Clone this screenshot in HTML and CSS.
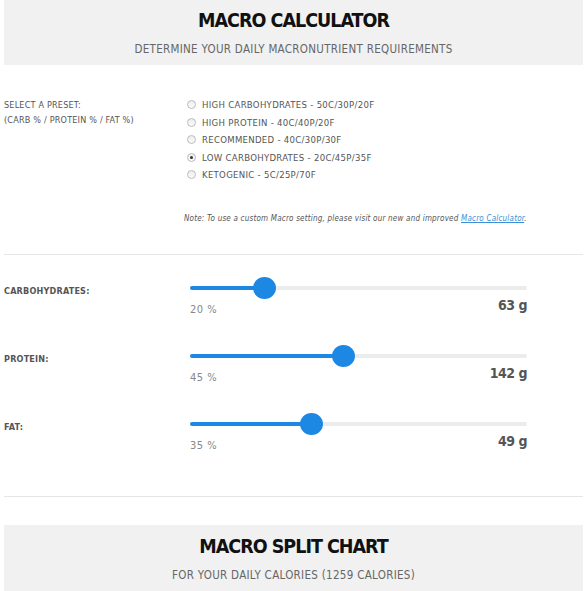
FILE: index.html
```html
<!DOCTYPE html>
<html>
<head>
<meta charset="utf-8">
<link rel="stylesheet" href="styles.css">
</head>
<body>
<div class="page">
  <div class="banner">
    <h1 class="banner-title">MACRO CALCULATOR</h1>
    <p class="banner-sub">DETERMINE YOUR DAILY MACRONUTRIENT REQUIREMENTS</p>
  </div>

  <div class="preset">
    <div class="preset-label">
      <div>SELECT A PRESET:</div>
      <div>(CARB % / PROTEIN % / FAT %)</div>
    </div>
    <div class="preset-options">
      <label class="opt"><span class="radio"></span>HIGH CARBOHYDRATES - 50C/30P/20F</label>
      <label class="opt"><span class="radio"></span>HIGH PROTEIN - 40C/40P/20F</label>
      <label class="opt"><span class="radio"></span>RECOMMENDED - 40C/30P/30F</label>
      <label class="opt"><span class="radio checked"></span>LOW CARBOHYDRATES - 20C/45P/35F</label>
      <label class="opt"><span class="radio"></span>KETOGENIC - 5C/25P/70F</label>
    </div>
  </div>
  <p class="note">Note: To use a custom Macro setting, please visit our new and improved <a href="#">Macro Calculator</a>.</p>

  <hr class="rule">

  <div class="macros">
    <div class="macro">
      <div class="macro-name">CARBOHYDRATES:</div>
      <div class="macro-ctrl">
        <div class="slider"><div class="fill" style="width:calc(11px + 0.20 * (100% - 22px))"></div><div class="thumb" style="left:calc(0.20 * (100% - 22px))"></div></div>
        <div class="macro-vals"><span class="pct">20 %</span><span class="grams">63 g</span></div>
      </div>
    </div>
    <div class="macro">
      <div class="macro-name">PROTEIN:</div>
      <div class="macro-ctrl">
        <div class="slider"><div class="fill" style="width:calc(11px + 0.45 * (100% - 22px))"></div><div class="thumb" style="left:calc(0.45 * (100% - 22px))"></div></div>
        <div class="macro-vals"><span class="pct">45 %</span><span class="grams">142 g</span></div>
      </div>
    </div>
    <div class="macro">
      <div class="macro-name">FAT:</div>
      <div class="macro-ctrl">
        <div class="slider"><div class="fill" style="width:calc(11px + 0.35 * (100% - 22px))"></div><div class="thumb" style="left:calc(0.35 * (100% - 22px))"></div></div>
        <div class="macro-vals"><span class="pct">35 %</span><span class="grams">49 g</span></div>
      </div>
    </div>
  </div>

  <hr class="rule rule2">

  <div class="banner banner2">
    <h2 class="banner-title">MACRO SPLIT CHART</h2>
    <p class="banner-sub">FOR YOUR DAILY CALORIES (1259 CALORIES)</p>
  </div>
</div>
</body>
</html>
```

FILE: styles.css
```css
html, body {
  margin: 0;
  padding: 0;
  background: #fff;
}
body {
  font-family: "DejaVu Sans", "Liberation Sans", sans-serif;
  font-stretch: condensed;
  color: #555;
}
.page {
  padding: 0 4px;
  width: 579px;
}
.banner {
  background: #f1f1f1;
  height: 65px;
  text-align: center;
  padding-top: 9px;
  box-sizing: border-box;
}
.banner-title {
  margin: 0;
  font-size: 19.5px;
  line-height: 24px;
  font-weight: bold;
  color: #111;
  letter-spacing: -1px;
}
.banner-sub {
  margin: 9px 0 0;
  font-size: 11.5px;
  line-height: 14px;
  color: #666;
  letter-spacing: 0.3px;
}
.preset {
  display: flex;
  margin-top: 31px;
}
.preset-label {
  width: 182px;
  font-size: 9px;
  line-height: 15px;
  color: #555;
  padding-top: 2px;
  letter-spacing: 0.2px;
}
.preset-options {
  display: flex;
  flex-direction: column;
  gap: 0;
}
.opt {
  display: flex;
  align-items: center;
  height: 17.5px;
  font-size: 9.5px;
  color: #555;
  letter-spacing: 0.3px;
}
.radio {
  width: 9px;
  height: 9px;
  border-radius: 50%;
  border: 1px solid #bbb;
  background: linear-gradient(#eee, #fafafa);
  margin-right: 6px;
  box-sizing: border-box;
  position: relative;
  margin-left: 1px;
}
.radio.checked::after {
  content: "";
  position: absolute;
  left: 2px;
  top: 2px;
  width: 3px;
  height: 3px;
  border-radius: 50%;
  background: #333;
}
.note {
  margin: 30px 0 0;
  font-size: 8px;
  font-style: italic;
  color: #555;
  padding-left: 180px;
  letter-spacing: 0.2px;
}
.note a {
  color: #3a8fd6;
  text-decoration: underline;
}
.rule {
  border: 0;
  border-top: 1px solid #e6e6e6;
  margin: 31px 0 0;
}
.macros {
  margin-top: 22px;
}
.macro {
  display: flex;
  height: 68px;
}
.macro-name {
  width: 186px;
  font-size: 9px;
  font-weight: bold;
  color: #555;
  padding-top: 9px;
  letter-spacing: 0.2px;
}
.macro-ctrl {
  width: 337px;
}
.slider {
  position: relative;
  height: 22px;
}
.slider::before {
  content: "";
  position: absolute;
  left: 0;
  right: 0;
  top: 9px;
  height: 4px;
  border-radius: 2px;
  background: #ececec;
}
.fill {
  position: absolute;
  left: 0;
  top: 9px;
  height: 4px;
  border-radius: 2px;
  background: #1d87e4;
}
.thumb {
  position: absolute;
  top: 0;
  width: 23px;
  height: 22px;
  border-radius: 50%;
  background: #1d87e4;
}
.macro-vals {
  display: flex;
  justify-content: space-between;
  align-items: flex-end;
  margin-top: 0;
}
.pct {
  font-size: 11px;
  color: #888;
  letter-spacing: 0.5px;
  position: relative;
  top: 1px;
}
.grams {
  font-size: 14px;
  font-weight: bold;
  color: #555;
  letter-spacing: -0.5px;
  position: relative;
  top: -2px;
}
.rule2 {
  margin-top: 15px;
}
.banner2 {
  margin-top: 28px;
  height: 70px;
  padding-top: 10px;
}
.banner2 .banner-sub {
  margin-top: 9px;
}
```
